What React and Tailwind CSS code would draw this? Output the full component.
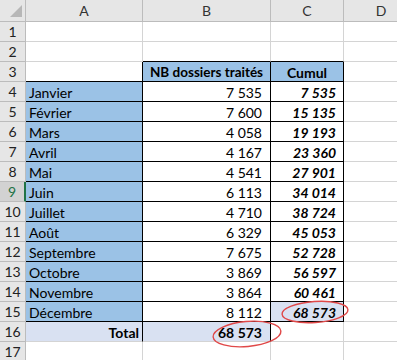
const months = [
  ['Janvier', 7535],
  ['Février', 7600],
  ['Mars', 4058],
  ['Avril', 4167],
  ['Mai', 4541],
  ['Juin', 6113],
  ['Juillet', 4710],
  ['Août', 6329],
  ['Septembre', 7675],
  ['Octobre', 3869],
  ['Novembre', 3864],
  ['Décembre', 8112],
];

function fmt(n) {
  return n.toString().replace(/\B(?=(\d{3})+(?!\d))/g, ' ');
}

const BLUE = 'bg-[#9bc2e6]';
const LAV = 'bg-[#d9e1f2]';

function Cell({ children, bg = 'bg-white', rb, bb, className = '' }) {
  return (
    <div
      className={`flex items-center overflow-hidden whitespace-nowrap border-r border-b pt-px ${bg} ${
        rb ? 'border-r-black' : 'border-r-[#d4d4d4]'
      } ${bb ? 'border-b-black' : 'border-b-[#d4d4d4]'} ${className}`}
    >
      {children}
    </div>
  );
}

function RowHead({ n, active }) {
  return (
    <div
      className={`flex items-center justify-center border-b border-r border-b-[#bcbcbc] ${
        active ? 'border-r-2 border-r-[#217346] bg-[#d2d2d2] text-[#217346]' : 'border-r-[#bcbcbc] bg-[#e6e6e6] text-[#222]'
      }`}
    >
      {n}
    </div>
  );
}

function ColHead({ children }) {
  return (
    <div className="flex items-center justify-center border-b border-r border-[#bcbcbc] bg-[#e6e6e6] text-[#333]">
      {children}
    </div>
  );
}

export default function App() {
  let cumul = 0;
  const total = months.reduce((s, m) => s + m[1], 0);

  return (
    <div className="relative h-[360px] w-[397px] overflow-hidden bg-white font-['Lato','Liberation_Sans',sans-serif] text-[14px] text-black">
      <div className="grid grid-cols-[26px_117px_128px_73px_75px] grid-rows-[22px_repeat(17,20px)]">
        <div className="relative border-b border-r border-[#bcbcbc] bg-[#e6e6e6]">
          <svg className="absolute left-0 top-0" width="25" height="21">
            <polygon points="10,17 22,17 22,5" fill="#b7b7b7" />
          </svg>
        </div>
        <ColHead>A</ColHead>
        <ColHead>B</ColHead>
        <ColHead>C</ColHead>
        <ColHead>D</ColHead>

        <RowHead n={1} />
        <Cell />
        <Cell />
        <Cell />
        <Cell />

        <RowHead n={2} />
        <Cell />
        <Cell bb />
        <Cell bb />
        <Cell />

        <RowHead n={3} />
        <Cell rb bb />
        <Cell bg={BLUE} rb bb className="justify-center text-[13.5px] font-bold">
          NB dossiers traités
        </Cell>
        <Cell bg={BLUE} rb bb className="justify-center font-bold">
          Cumul
        </Cell>
        <Cell />

        {months.map(([name, v], i) => {
          cumul += v;
          return [
            <RowHead key={`h${i}`} n={i + 4} active={i === 5} />,
            <Cell key={`a${i}`} bg={BLUE} rb bb className="pl-[3px]">
              {name}
            </Cell>,
            <Cell key={`b${i}`} rb bb className="justify-end pr-[8px]">
              {fmt(v)}
            </Cell>,
            <Cell key={`c${i}`} bg={i === 11 ? LAV : 'bg-white'} rb bb className="justify-end pr-[7px] font-bold italic">
              {fmt(cumul)}
            </Cell>,
            <Cell key={`d${i}`} />,
          ];
        })}

        <RowHead n={16} />
        <Cell bg={LAV} rb className="justify-end pr-[3px] font-bold">
          Total
        </Cell>
        <Cell bg={LAV} rb className="justify-end pr-[8px] font-bold">
          {fmt(total)}
        </Cell>
        <Cell />
        <Cell />

        <RowHead n={17} />
        <Cell />
        <Cell />
        <Cell />
        <Cell />
      </div>

      <svg className="pointer-events-none absolute left-0 top-0" width="397" height="360">
        <ellipse cx="247" cy="334" rx="34" ry="12.5" transform="rotate(-5 247 334)" fill="none" stroke="#e04848" strokeWidth="1.4" />
        <ellipse cx="315" cy="312" rx="33" ry="10.5" transform="rotate(-4 315 312)" fill="none" stroke="#e04848" strokeWidth="1.4" />
      </svg>
    </div>
  );
}
